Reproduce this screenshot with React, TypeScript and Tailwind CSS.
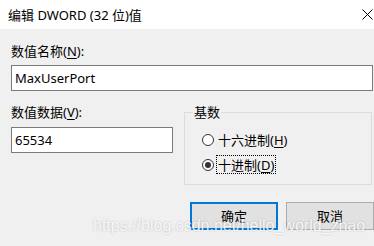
import React from 'react';

const ui = 'font-["Noto_Sans","Noto_Sans_CJK_SC",sans-serif]';

function Key({ k }: { k: string }) {
  return <span className="underline underline-offset-[2px] decoration-1">{k}</span>;
}

function Radio({ checked, label, hotkey, focused }: { checked?: boolean; label: string; hotkey: string; focused?: boolean }) {
  return (
    <div className="flex h-[19px] items-center">
      <div className="flex h-[12px] w-[12px] items-center justify-center rounded-full border border-[#333333] bg-white">
        {checked && <div className="h-[6px] w-[6px] rounded-full bg-[#333333]" />}
      </div>
      <div
        className={
          'ml-[2px] flex h-[19px] items-center border px-[1px] leading-[16px] ' +
          (focused ? 'border-dotted border-black' : 'border-transparent')
        }
      >
        {label}(<Key k={hotkey} />)
      </div>
    </div>
  );
}

export default function App() {
  return (
    <div className={`relative h-[246px] w-[374px] overflow-hidden bg-[#f0f0f0] text-[13px] text-black ${ui}`}>
      <div className="flex h-[29px] items-center justify-between bg-white pl-[8px] pr-[1px]">
        <span className="leading-[16px]">编辑 DWORD (32 位)值</span>
        <svg width="11" height="11" viewBox="0 0 11 11" className="mb-[1px]">
          <path d="M0.5 0.5 L10.5 10.5 M10.5 0.5 L0.5 10.5" stroke="#000" strokeWidth="1" fill="none" />
        </svg>
      </div>

      <div className="pl-[11px] pr-[1px] pt-[14px]">
        <div className="leading-[16px]">
          数值名称(<Key k="N" />):
        </div>
        <div className="mt-[6px] flex h-[26px] items-center border border-[#7a7a7a] bg-white px-[3px] leading-[16px]">
          MaxUserPort
        </div>

        <div className="mt-[13px] flex">
          <div className="w-[162px]">
            <div className="leading-[16px]">
              数值数据(<Key k="V" />):
            </div>
            <div className="mt-[7px] flex h-[26px] items-center border border-[#7a7a7a] bg-white px-[3px] leading-[16px]">
              65534
            </div>
          </div>

          <div className="relative ml-[11px] mt-[8px] h-[73px] w-[188px] border border-[#dcdcdc] pl-[17px] pt-[17px]">
            <span className="absolute left-[8px] top-[-9px] bg-[#f0f0f0] px-[1px] leading-[16px]">基数</span>
            <div className="flex flex-col gap-[6px]">
              <Radio label="十六进制" hotkey="H" />
              <Radio label="十进制" hotkey="D" checked focused />
            </div>
          </div>
        </div>

        <div className="mt-[17px] flex justify-end gap-[8px] -mr-px">
          <button className="flex h-[28px] w-[88px] items-center justify-center border-2 border-[#0078d7] bg-[#e1e1e1] leading-[16px]">
            确定
          </button>
          <button className="flex h-[28px] w-[88px] items-center justify-center border border-[#adadad] bg-[#e1e1e1] leading-[16px]">
            取消
          </button>
        </div>
      </div>

      <div className='pointer-events-none absolute left-[93px] top-[218px] whitespace-nowrap font-["Liberation_Sans",Arial,sans-serif] text-[16px] leading-[16px] text-white/85 [text-shadow:0_0_2px_rgba(0,0,0,0.25)]'>
        https://blog.csdn.net/hello_world_zhao
      </div>
    </div>
  );
}
